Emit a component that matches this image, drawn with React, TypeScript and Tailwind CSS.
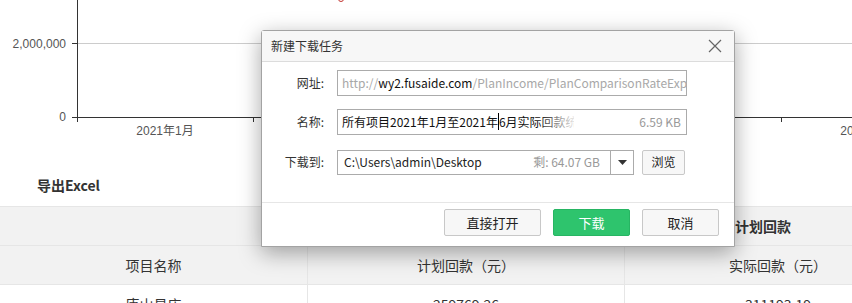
import React from "react"

const font = "font-['Microsoft_YaHei','Noto_Sans_CJK_SC','Noto_Sans',sans-serif]"

const ticks = [77, 253, 429, 605, 781]
const labels = [165, 341, 517, 693, 869]

function Chart() {
	return (
		<svg width={852} height={150} className="block">
			<line x1={77} y1={43.5} x2={852} y2={43.5} stroke="#cccccc" />
			<line x1={77.5} y1={0} x2={77.5} y2={117} stroke="#333" />
			<line x1={72} y1={43.5} x2={77} y2={43.5} stroke="#333" />
			<line x1={72} y1={117.5} x2={852} y2={117.5} stroke="#333" />
			{ticks.map((x) => (
				<line key={x} x1={x + 0.5} y1={117} x2={x + 0.5} y2={122} stroke="#333" />
			))}
			<text x={66} y={48} textAnchor="end" fontSize={12} fill="#555" fontFamily="Liberation Sans, Noto Sans CJK SC, sans-serif">
				2,000,000
			</text>
			<text x={66} y={121} textAnchor="end" fontSize={12} fill="#555" fontFamily="Liberation Sans, Noto Sans CJK SC, sans-serif">
				0
			</text>
			{labels.map((x) => (
				<text key={x} x={x} y={135} textAnchor="middle" fontSize={12} fill="#555" fontFamily="Liberation Sans, Noto Sans CJK SC, sans-serif">
					2021年1月
				</text>
			))}
			<circle cx={341} cy={-1} r={2.5} fill="none" stroke="#c23531" />
		</svg>
	)
}

function Table() {
	return (
		<div className="w-[941px] border-t border-[#e6e6e6] text-[14px] text-[#333]">
			<div className="grid h-[39px] grid-cols-[307px_317px_317px] border-b border-[#e6e6e6] bg-[#f2f2f2]">
				<div />
				<div className="border-l border-[#e6e6e6]" />
				<div className="flex items-center border-l border-[#e6e6e6] pl-[110px] font-bold">计划回款</div>
			</div>
			<div className="grid h-[39px] grid-cols-[307px_317px_317px] border-b border-[#e6e6e6] bg-[#f2f2f2]">
				<div className="flex items-center justify-center">项目名称</div>
				<div className="flex items-center justify-center border-l border-[#e6e6e6]">计划回款（元）</div>
				<div className="flex items-center justify-center border-l border-[#e6e6e6] pr-[10px]">实际回款（元）</div>
			</div>
			<div className="grid h-[39px] grid-cols-[307px_317px_317px] border-b border-[#e6e6e6] bg-white">
				<div className="flex items-center justify-center">唐山易店</div>
				<div className="flex items-center justify-center border-l border-[#e6e6e6]">259769.26</div>
				<div className="flex items-center justify-center border-l border-[#e6e6e6] pr-[10px]">311193.19</div>
			</div>
		</div>
	)
}

function Btn({ children, green, w }: { children: React.ReactNode; green?: boolean; w: string }) {
	return (
		<button
			className={
				green
					? `flex h-[27px] ${w} items-center justify-center rounded-[2px] border border-[#27b563] bg-[#2ec46d] text-[13px] text-white`
					: `flex h-[27px] ${w} items-center justify-center rounded-[2px] border border-[#c8c8c8] bg-[#f7f7f7] text-[13px] text-[#222]`
			}
		>
			{children}
		</button>
	)
}

function Dialog() {
	return (
		<div className="absolute left-[261px] top-[30px] flex h-[217px] w-[474px] flex-col rounded-t-[3px] border border-[#a3a3a3] bg-white shadow-[0_6px_22px_rgba(0,0,0,0.35)]">
			<div className="flex h-[31px] items-center justify-between border-b border-[#dcdcdc] bg-[#f7f7f7] pl-[9px] pr-[12px]">
				<span className="text-[12px] text-[#333]">新建下载任务</span>
				<svg width={14} height={14} viewBox="0 0 14 14">
					<path d="M1 1L13 13M13 1L1 13" stroke="#666" strokeWidth={1.2} fill="none" />
				</svg>
			</div>
			<div className="flex flex-col pt-[8px] text-[12px]">
				<div className="flex h-[26px] items-center">
					<span className="w-[62px] text-right text-[#333]">网址:</span>
					<div className="ml-[13px] flex h-[26px] w-[350px] items-center overflow-hidden whitespace-nowrap border border-[#ababab] pl-[4px] text-[#a8a8a8]">
						http://<span className="text-[#111]">wy2.fusaide.com</span>/PlanIncome/PlanComparisonRateExport
					</div>
				</div>
				<div className="mt-[13px] flex h-[26px] items-center">
					<span className="w-[62px] text-right text-[#333]">名称:</span>
					<div className="relative ml-[13px] flex h-[26px] w-[350px] items-center overflow-hidden whitespace-nowrap border border-[#ababab] pl-[4px] pr-[5px]">
						<span className="w-[232px] overflow-hidden text-[#111]">
							所有项目2021年1月至2021年<span className="border-l border-black" />6月实际回款统计.xls
						</span>
						<span className="absolute left-[200px] top-0 h-full w-[40px] bg-gradient-to-r from-transparent to-white" />
						<span className="ml-auto text-[#999]">6.59 KB</span>
					</div>
				</div>
				<div className="mt-[14px] flex h-[26px] items-center">
					<span className="w-[62px] text-right text-[#333]">下载到:</span>
					<div className="ml-[13px] flex h-[25px] w-[297px] items-center whitespace-nowrap border border-[#ababab]">
						<span className="pl-[6px] text-[#222]">C:\Users\admin\Desktop</span>
						<span className="ml-auto pr-[10px] text-[#999]">剩: 64.07 GB</span>
						<span className="flex h-full w-[23px] items-center justify-center border-l border-[#ababab]">
							<svg width={9} height={5} viewBox="0 0 9 5">
								<path d="M0 0H9L4.5 5Z" fill="#333" />
							</svg>
						</span>
					</div>
					<button className="ml-[8px] flex h-[25px] w-[43px] items-center justify-center rounded-[2px] border border-[#c8c8c8] bg-[#f7f7f7] text-[12px] text-[#222]">
						浏览
					</button>
				</div>
			</div>
			<div className="mt-auto flex h-[44px] items-start justify-end gap-[12px] border-t border-[#e6e6e6] pr-[15px] pt-[6px]">
				<Btn w="w-[97px]">直接打开</Btn>
				<Btn w="w-[77px]" green>
					下载
				</Btn>
				<Btn w="w-[77px]">取消</Btn>
			</div>
		</div>
	)
}

export default function App() {
	return (
		<div className={`relative h-[303px] w-[852px] overflow-hidden bg-white ${font}`}>
			<Chart />
			<div className="flex h-[56px] items-end pb-[10px] pl-[37px] text-[14px] font-bold text-[#333]">导出Excel</div>
			<Table />
			<Dialog />
		</div>
	)
}
